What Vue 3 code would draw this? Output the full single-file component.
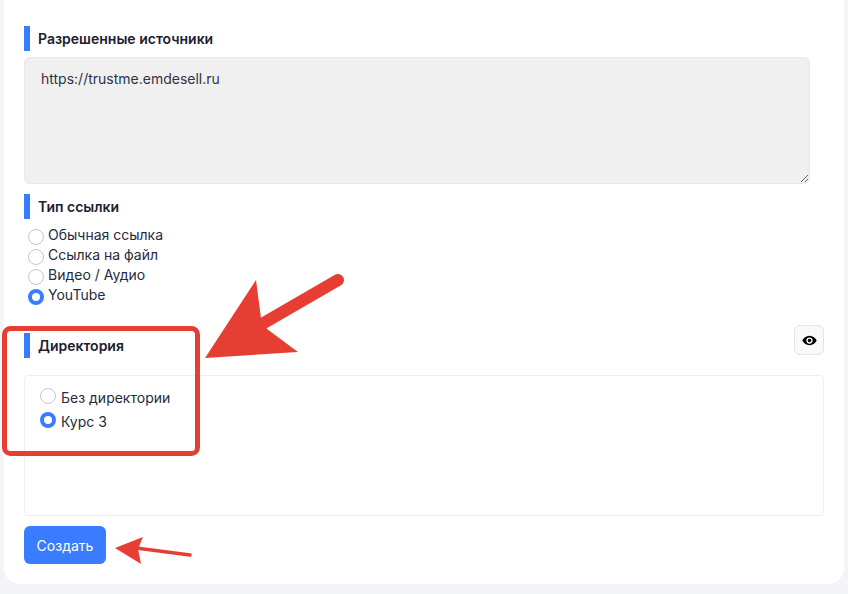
<script setup>
const linkTypes = [
  { label: 'Обычная ссылка', checked: false },
  { label: 'Ссылка на файл', checked: false },
  { label: 'Видео / Аудио', checked: false },
  { label: 'YouTube', checked: true },
]
const directories = [
  { label: 'Без директории', checked: false },
  { label: 'Курс 3', checked: true },
]
</script>

<template>
  <div class="page">
    <main class="card">
      <section class="sources">
        <h3 class="title">Разрешенные источники</h3>
        <textarea class="area" disabled value="https://trustme.emdesell.ru"></textarea>
      </section>

      <section class="types">
        <h3 class="title">Тип ссылки</h3>
        <div class="type-list">
          <label v-for="t in linkTypes" :key="t.label" class="type-row">
            <span class="radio" :class="{ on: t.checked }"></span>
            <span>{{ t.label }}</span>
          </label>
        </div>
      </section>

      <section class="dirs">
        <div class="dir-head">
          <h3 class="title">Директория</h3>
          <button class="eye" type="button" aria-label="Показать">
            <svg width="15" height="15" viewBox="0 0 24 24">
              <path fill="#000" fill-rule="evenodd" d="M12 4.5C6.500 4.500 2.200 8 .5 12c1.700 4 6 7.500 11.500 7.500S21.800 16 23.500 12C21.800 8 17.500 4.500 12 4.500zm0 12.500a5 5 0 1 1 0-10 5 5 0 0 1 0 10zm0-2.200a2.800 2.800 0 1 0 0-5.600 2.800 2.800 0 0 0 0 5.600z"/>
            </svg>
          </button>
        </div>
        <div class="dir-box">
          <label v-for="d in directories" :key="d.label" class="dir-row">
            <span class="radio" :class="{ on: d.checked }"></span>
            <span>{{ d.label }}</span>
          </label>
        </div>
      </section>

      <button class="submit" type="button">Создать</button>
    </main>

    <svg class="notes" width="848" height="594" viewBox="0 0 848 594">
      <rect x="4.500" y="328.500" width="193" height="125" rx="6" fill="none" stroke="#e73e33" stroke-width="5" />
      <path d="M262 324 338 280" stroke="#e73e33" stroke-width="12" stroke-linecap="round" fill="none" />
      <polygon points="205,358 256,280 261,318 267,329 298,352" fill="#e73e33" />
      <path d="M136 548 190 555" stroke="#e73e33" stroke-width="3.500" stroke-linecap="round" fill="none" />
      <polygon points="115,548 143,537 138,549 141,564" fill="#e73e33" />
    </svg>
  </div>
</template>

<style>
html, body { margin: 0; background: #f3f4f7; }
</style>

<style scoped>
.page {
  position: relative;
  width: 848px;
  height: 594px;
  overflow: hidden;
  background: #f3f4f7;
  font-family: Inter, "Noto Sans", sans-serif;
  font-size: 14px;
  color: #262b3d;
}
.card {
  box-sizing: border-box;
  width: 840px;
  height: 584px;
  margin-left: 4px;
  padding: 26px 20px 0;
  background: #fff;
  border-radius: 0 0 16px 16px;
}
.title {
  box-sizing: border-box;
  height: 25px;
  margin: 0;
  padding-left: 8px;
  border-left: 6px solid #3a7cff;
  font-size: 14px;
  font-weight: 600;
  line-height: 26px;
  color: #1c2030;
}
.area {
  display: block;
  box-sizing: border-box;
  width: 786px;
  height: 127px;
  margin: 6px 0 0;
  padding: 11px 16px;
  background: #f0f0f0;
  border: 1px solid #e8e8ea;
  border-radius: 6px;
  font: 14px/20px Inter, "Noto Sans", sans-serif;
  color: #2f3446;
  opacity: 1;
  outline: none;
}
.types { margin-top: 10px; }
.type-list {
  display: flex;
  flex-direction: column;
  margin-top: 6px;
  padding-left: 4px;
}
.type-row {
  display: flex;
  align-items: center;
  gap: 4px;
  height: 20px;
  line-height: 20px;
}
.radio {
  box-sizing: border-box;
  flex: none;
  width: 16px;
  height: 16px;
  margin-top: 3px;
  background: #fff;
  border: 1px solid #c4c6cc;
  border-radius: 50%;
}
.radio.on { border: 4px solid #3a7cff; }
.dirs { margin-top: 28px; }
.dir-head {
  position: relative;
  display: flex;
  justify-content: space-between;
  align-items: flex-start;
  height: 42px;
}
.eye {
  display: flex;
  align-items: center;
  justify-content: center;
  box-sizing: border-box;
  width: 30px;
  height: 30px;
  margin-top: -8px;
  padding: 0;
  background: #f8f9fb;
  border: 1px solid #e3e4e8;
  border-radius: 6px;
}
.dir-box {
  box-sizing: border-box;
  display: flex;
  flex-direction: column;
  gap: 4px;
  height: 141px;
  padding: 12px 15px;
  border: 1px solid #eceef1;
  border-radius: 4px;
}
.dir-row {
  display: flex;
  align-items: center;
  gap: 5px;
  height: 20px;
  line-height: 20px;
}
.dir-row .radio { margin-top: -4px; }
.submit {
  display: block;
  width: 82px;
  height: 38px;
  margin-top: 10px;
  padding: 0;
  background: #3a7cff;
  border: 0;
  border-radius: 6px;
  font: 14px Inter, "Noto Sans", sans-serif;
  color: #fff;
}
.notes {
  position: absolute;
  left: 0;
  top: 0;
  pointer-events: none;
}
</style>
